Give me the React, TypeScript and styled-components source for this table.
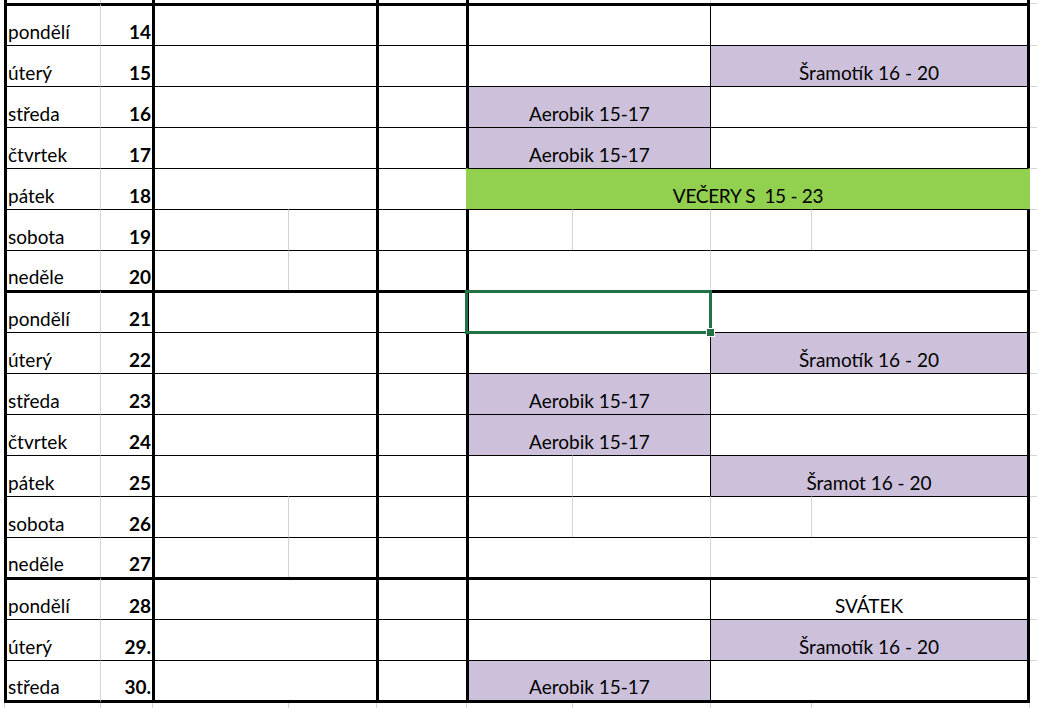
import styled, { createGlobalStyle } from "styled-components";

type Line = 'thick' | 'thin' | 'grid' | 'none';

type Zone = {
  span: number;
  left: Line;
  fill?: string;
  text?: string;
  cover?: boolean;
  select?: boolean;
};

type Day = {
  name: string;
  num: string;
  h: number;
  top: 'thick' | 'thin';
  weekend?: boolean;
  last?: boolean;
  zones: Zone[];
};

const COLS = [96, 52, 136, 88, 90, 106, 138, 101, 219, 7];
const PURPLE = '#ccc0da';
const GREEN = '#92d050';
const GRID = '#d4d4d4';

const lineWidth = (l: Line) => (l === 'thick' ? 3 : 1);
const lineColor = (l: Line, fill: string) =>
  l === 'thick' || l === 'thin' ? '#000' : l === 'grid' ? GRID : fill;

const GlobalStyle = createGlobalStyle`
  html, body {
    margin: 0;
    padding: 0;
    background: #fff;
  }
  body {
    font-family: Lato, "Open Sans", "DejaVu Sans", sans-serif;
    color: #000;
    overflow: hidden;
  }
`;

const Sheet = styled.div`
  width: 1037px;
  height: 708px;
  padding-left: 4px;
  box-sizing: border-box;
  overflow: hidden;
`;

const Row = styled.div<{ $h: number }>`
  display: grid;
  grid-template-columns: ${COLS.map((c) => c + 'px').join(' ')};
  height: ${(p) => p.$h}px;
`;

const Cell = styled.div<{
  $left: Line;
  $top?: Line;
  $right?: Line;
  $bottom?: Line;
  $span?: number;
  $fill?: string;
  $cover?: boolean;
  $align?: 'left' | 'right' | 'center';
  $bold?: boolean;
}>`
  grid-column: span ${(p) => p.$span ?? 1};
  position: relative;
  box-sizing: border-box;
  min-width: 0;
  background: ${(p) => p.$fill ?? '#fff'};
  border-left: ${(p) => lineWidth(p.$left)}px solid
    ${(p) => (p.$cover ? p.$fill : lineColor(p.$left, p.$fill ?? '#fff'))};
  border-top: ${(p) => (p.$top ? `${lineWidth(p.$top)}px solid ${lineColor(p.$top, '#fff')}` : 'none')};
  border-right: ${(p) =>
    p.$right ? `${lineWidth(p.$right)}px solid ${p.$cover ? p.$fill : lineColor(p.$right, '#fff')}` : 'none'};
  border-bottom: ${(p) => (p.$bottom ? `${lineWidth(p.$bottom)}px solid ${lineColor(p.$bottom, '#fff')}` : 'none')};
  display: flex;
  align-items: flex-end;
  justify-content: ${(p) =>
    p.$align === 'right' ? 'flex-end' : p.$align === 'center' ? 'center' : 'flex-start'};
  padding: 0 ${(p) => (p.$align === 'center' ? 0 : 1)}px 4px;
  font-size: 19px;
  font-weight: ${(p) => (p.$bold ? 700 : 400)};
  line-height: 1;
  white-space: nowrap;
`;

const Banner = styled.span`
  letter-spacing: -0.3px;
`;

const Selection = styled.div`
  position: absolute;
  left: -4px;
  top: -3px;
  right: -2px;
  bottom: -2px;
  border: 3px solid #217346;
  z-index: 2;
  pointer-events: none;
`;

const Handle = styled.span`
  position: absolute;
  right: -6px;
  bottom: -6px;
  width: 9px;
  height: 9px;
  box-sizing: border-box;
  background: #217346;
  border: 1px solid #fff;
`;

const aerobik: Zone[] = [
  { span: 2, left: 'thick', fill: PURPLE, text: 'Aerobik 15-17' },
  { span: 2, left: 'thin' },
];
const sramotik: Zone[] = [
  { span: 2, left: 'thick' },
  { span: 2, left: 'thin', fill: PURPLE, text: 'Šramotík 16 - 20' },
];
const plain: Zone[] = [
  { span: 2, left: 'thick' },
  { span: 2, left: 'thin' },
];
const saturday: Zone[] = [
  { span: 1, left: 'thick' },
  { span: 1, left: 'grid' },
  { span: 1, left: 'grid' },
  { span: 1, left: 'grid' },
];
const sunday: Zone[] = [
  { span: 2, left: 'thick' },
  { span: 2, left: 'grid' },
];

const days: Day[] = [
  { name: 'pondělí', num: '14', h: 42, top: 'thick', zones: plain },
  { name: 'úterý', num: '15', h: 41, top: 'thin', zones: sramotik },
  { name: 'středa', num: '16', h: 41, top: 'thin', zones: aerobik },
  { name: 'čtvrtek', num: '17', h: 41, top: 'thin', zones: aerobik },
  {
    name: 'pátek', num: '18', h: 41, top: 'thin',
    zones: [{ span: 4, left: 'thick', fill: GREEN, text: 'VEČERY S\u00a0 15 - 23', cover: true }],
  },
  { name: 'sobota', num: '19', h: 41, top: 'thin', weekend: true, zones: saturday },
  { name: 'neděle', num: '20', h: 40, top: 'thin', weekend: true, zones: sunday },
  {
    name: 'pondělí', num: '21', h: 42, top: 'thick',
    zones: [{ span: 2, left: 'thick', select: true }, { span: 2, left: 'thin' }],
  },
  { name: 'úterý', num: '22', h: 41, top: 'thin', zones: sramotik },
  { name: 'středa', num: '23', h: 41, top: 'thin', zones: aerobik },
  { name: 'čtvrtek', num: '24', h: 41, top: 'thin', zones: aerobik },
  {
    name: 'pátek', num: '25', h: 41, top: 'thin',
    zones: [
      { span: 1, left: 'thick' },
      { span: 1, left: 'grid' },
      { span: 2, left: 'thin', fill: PURPLE, text: 'Šramot 16 - 20' },
    ],
  },
  { name: 'sobota', num: '26', h: 41, top: 'thin', weekend: true, zones: saturday },
  { name: 'neděle', num: '27', h: 40, top: 'thin', weekend: true, zones: sunday },
  {
    name: 'pondělí', num: '28', h: 42, top: 'thick',
    zones: [{ span: 2, left: 'thick' }, { span: 2, left: 'thin', text: 'SVÁTEK' }],
  },
  { name: 'úterý', num: '29.', h: 41, top: 'thin', zones: sramotik },
  { name: 'středa', num: '30.', h: 43, top: 'thin', last: true, zones: aerobik },
];

const DayRow = ({ day }: { day: Day }) => {
  const top = day.top;
  const bottom: Line | undefined = day.last ? 'thick' : undefined;
  return (
    <Row $h={day.h}>
      <Cell $left="thick" $top={top} $bottom={bottom}>{day.name}</Cell>
      <Cell $left="grid" $top={top} $bottom={bottom} $align="right" $bold>{day.num}</Cell>
      {day.weekend ? (
        <>
          <Cell $left="thick" $top={top} $bottom={bottom} />
          <Cell $left="grid" $top={top} $bottom={bottom} />
        </>
      ) : (
        <Cell $left="thick" $top={top} $bottom={bottom} $span={2} />
      )}
      <Cell $left="thick" $top={top} $bottom={bottom} />
      {day.zones.map((z, i) => (
        <Cell
          key={i}
          $span={z.span}
          $left={z.left}
          $top={top}
          $bottom={bottom}
          $right={i === day.zones.length - 1 ? 'thick' : undefined}
          $fill={z.fill}
          $cover={z.cover}
          $align="center"
        >
          {z.cover ? <Banner>{z.text}</Banner> : z.text}
          {z.select && (
            <Selection>
              <Handle />
            </Selection>
          )}
        </Cell>
      ))}
      <Cell $left="none" $top="grid" />
    </Row>
  );
};

const topEdge: Line[] = ['thick', 'grid', 'thick', 'none', 'thick', 'thick', 'none', 'grid', 'none'];

const App = () => (
  <>
    <GlobalStyle />
    <Sheet>
      <Row $h={3}>
        {topEdge.map((l, i) => (
          <Cell key={i} $left={l} $right={i === 8 ? 'thick' : undefined} />
        ))}
        <Cell $left="none" />
      </Row>
      {days.map((d, i) => (
        <DayRow key={i} day={d} />
      ))}
      <Row $h={5}>
        {COLS.slice(0, 9).map((_, i) => (
          <Cell key={i} $left="grid" $right={i === 8 ? 'grid' : undefined} />
        ))}
        <Cell $left="none" />
      </Row>
    </Sheet>
  </>
);

export default App;
